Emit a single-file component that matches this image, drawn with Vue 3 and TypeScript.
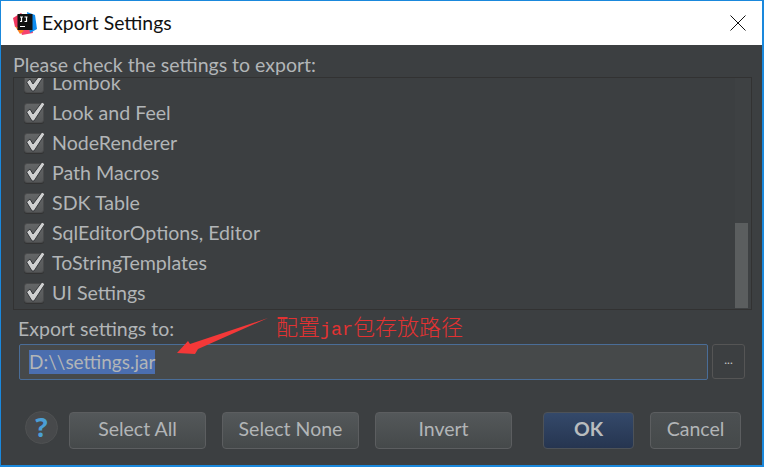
<script setup lang="ts">
const rows: string[] = ['Lombok', 'Look and Feel', 'NodeRenderer', 'Path Macros', 'SDK Table', 'SqlEditorOptions, Editor', 'ToStringTemplates', 'UI Settings']
const leftButtons: string[] = ['Select All', 'Select None', 'Invert']
</script>

<template>
  <div class="window">
    <header class="titlebar">
      <svg class="logo" width="26" height="26" viewBox="0 0 26 26">
        <path d="M1 8 L9 3 L14 8 L9 18 L3 17 Z" fill="#f0365e" />
        <path d="M8 20 L20 18 L21 23 L10 25 Z" fill="#f5436f" />
        <path d="M15 2 L23 5 L25 19 L18 23 Z" fill="#0d8cf0" />
        <path d="M3 16 L8 24 L12 21 Z" fill="#fc801d" />
        <rect x="5.5" y="4" width="15" height="16" fill="#111" />
        <path d="M8 7 H11 M9.5 7 V11.5 H8 M12.5 7 H15.5 M14.5 7 V11.5 H12.5 M8 16.5 H13" stroke="#fff" stroke-width="1.2" fill="none" />
      </svg>
      <span class="title">Export Settings</span>
      <svg class="close" width="16" height="16" viewBox="0 0 16 16">
        <path d="M.5 .5 L15.5 15.5 M15.5 .5 L.5 15.5" stroke="#111" stroke-width="1" fill="none" />
      </svg>
    </header>

    <main class="body">
      <p class="prompt">Please check the settings to export:</p>
      <div class="listbox">
        <ul class="rows">
          <li v-for="row in rows" :key="row" class="row">
            <span class="check">
              <svg width="26" height="26" viewBox="0 0 26 26">
                <path d="M4.5 15 L8 12 L11 17 L20 5 L23 7 L12 24 L10 24 Z" fill="#cfd0d0" stroke="#35373a" stroke-width="1" />
              </svg>
            </span>
            <span class="row-text">{{ row }}</span>
          </li>
        </ul>
        <div class="track"><div class="thumb"></div></div>
      </div>

      <section class="export">
        <div class="label-line">
          <label class="label">Export settings to:</label>
          <span class="note">配置<span class="latin">jar</span>包存放路径</span>
        </div>
        <div class="path-line">
          <div class="field"><span class="selected">D:\\settings.jar</span></div>
          <button class="browse" type="button">...</button>
        </div>
        <svg class="arrow" width="100" height="44" viewBox="0 0 100 44">
          <path d="M96 1 L18 27 L16 24 L5 36 L23 37 L26 32 Z" fill="#f43838" />
        </svg>
      </section>

      <footer class="actions">
        <span class="help">?</span>
        <button v-for="b in leftButtons" :key="b" class="btn" :class="'btn-' + b.replace(' ', '').toLowerCase()" type="button">{{ b }}</button>
        <span class="spacer"></span>
        <button class="btn btn-ok" type="button">OK</button>
        <button class="btn btn-cancel" type="button">Cancel</button>
      </footer>
    </main>
  </div>
</template>

<style>
html, body { margin: 0; background: #3c3f41; overflow: hidden; }
</style>

<style scoped>
.window {
  width: 764px;
  height: 467px;
  box-sizing: border-box;
  border: 1px solid #1a88dc;
  border-width: 1px 2px 2px 1px;
  display: flex;
  flex-direction: column;
  font-family: Lato, "Noto Sans", sans-serif;
  color: #b2b5b7;
  background: #3c3f41;
}
.titlebar {
  height: 44px;
  flex: none;
  background: #fff;
  display: flex;
  align-items: center;
  padding: 0 16px 0 11px;
  color: #111;
}
.logo { flex: none; margin-right: 4px; }
.title { font-size: 19.4px; flex: 1; padding-bottom: 2px; }
.close { flex: none; }
.body {
  flex: 1;
  display: flex;
  flex-direction: column;
  padding: 0 22px 0 12px;
  min-height: 0;
}
.prompt {
  margin: 8px 0 0;
  height: 24px;
  line-height: 24px;
  font-size: 19.5px;
  white-space: nowrap;
}
.listbox {
  height: 233px;
  width: 739px;
  box-sizing: border-box;
  flex: none;
  border: 1px solid #323232;
  display: flex;
  overflow: hidden;
}
.rows {
  list-style: none;
  margin: -10px 0 0;
  padding: 0 0 0 10px;
  flex: 1;
  font-size: 19.6px;
}
.row {
  height: 30px;
  display: flex;
  align-items: center;
  gap: 8px;
  white-space: nowrap;
}
.row-text { padding-bottom: 2px; }
.check {
  position: relative;
  flex: none;
  width: 20px;
  height: 20px;
  box-sizing: border-box;
  border: 1px solid #4a4b4c;
  border-radius: 3px;
  background: linear-gradient(#636566, #555758);
  box-shadow: 0 1px 0 #333;
}
.check svg { position: absolute; left: -3px; top: -7px; }
.track {
  flex: none;
  width: 16px;
  display: flex;
  align-items: flex-end;
  padding: 0 3px 1px 0;
  box-sizing: border-box;
  background: #3e4143;
}
.thumb {
  width: 13px;
  height: 85px;
  background: #5b5e5f;
}
.export {
  position: relative;
  margin-top: 2px;
}
.label-line {
  height: 32px;
  display: flex;
  align-items: center;
  padding-left: 5px;
  position: relative;
}
.label { font-size: 19.5px; width: 258px; flex: none; }
.note {
  color: #e33232;
  font-size: 22px;
  font-family: "Noto Sans CJK SC", serif;
  font-weight: 300;
  line-height: 1;
  white-space: nowrap;
  margin-top: -2px;
}
.latin { font-family: "Liberation Mono", monospace; font-size: 18.33px; }
.path-line {
  display: flex;
  gap: 4px;
  height: 36px;
  padding-left: 6px;
  margin-right: -12px;
}
.field {
  width: 689px;
  flex: none;
  box-sizing: border-box;
  border: 1px solid #4a6d97;
  box-shadow: inset 0 0 0 1px #46494b;
  border-radius: 2px;
  background: #46494a;
  padding: 5px 0 3px 9px;
  display: flex;
}
.selected {
  background: #4b6eaf;
  color: #b2b5b7;
  font-size: 19px;
  line-height: 24px;
  height: 24px;
  white-space: nowrap;
}
.browse {
  width: 33px;
  height: 35px;
  flex: none;
  box-sizing: border-box;
  border: 1px solid #555;
  border-radius: 3px;
  background: #3c3f41;
  color: #c8c8c8;
  padding: 0 0 4px;
  font: 12px Lato, sans-serif;
}
.arrow { position: absolute; left: 159px; top: 5px; }
.actions {
  margin-top: 31px;
  display: flex;
  align-items: center;
  height: 38px;
  width: 728px;
}
.help {
  width: 33px;
  height: 33px;
  margin-left: 12px;
  margin-right: 11px;
  margin-top: -6px;
  flex: none;
  box-sizing: border-box;
  border-radius: 50%;
  background: #47494b;
  border: 1px solid #4f5152;
  color: #4b9fd5;
  font: 700 26px/31px "Open Sans", sans-serif;
  text-align: center;
}
.btn {
  height: 37px;
  box-sizing: border-box;
  border: 1px solid #5c5e60;
  border-radius: 4px;
  background: linear-gradient(#54585a, #45494a);
  color: #b2b5b7;
  font: 19.5px Lato, sans-serif;
  padding: 0 0 3px;
}
.btn-selectall { width: 137px; margin-right: 16px; }
.btn-selectnone { width: 137px; margin-right: 16px; }
.btn-invert { width: 137px; }
.spacer { flex: 1; }
.btn-ok {
  width: 91px;
  margin-right: 16px;
  background: linear-gradient(#34496a, #263550);
  border-color: #4d5258;
  font-weight: 700;
  color: #b9bcbe;
}
.btn-cancel { width: 91px; background: linear-gradient(#4c5052, #45494a); }
</style>
